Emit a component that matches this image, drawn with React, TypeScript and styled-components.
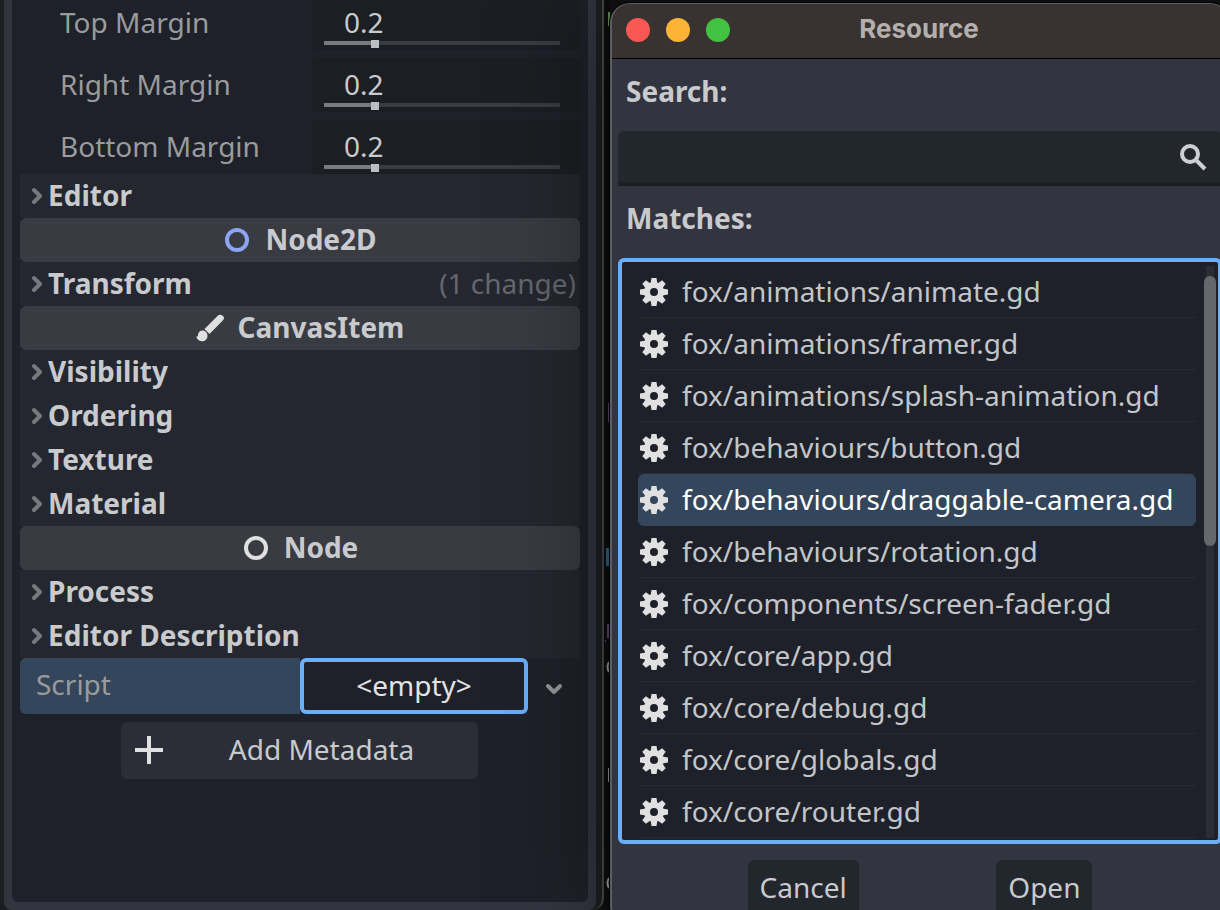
import React, { useState } from "react";
import styled, { createGlobalStyle } from "styled-components";

const GlobalStyle = createGlobalStyle`
  * { box-sizing: border-box; }
  body {
    margin: 0;
    background: #111213;
    color: #c8cacd;
    font: 28px/36px "Noto Sans", sans-serif;
  }
  button, input { font: inherit; color: inherit; }
`;

const Desktop = styled.div`
  display: grid;
  grid-template-columns: minmax(0, 604fr) 6px minmax(0, 610fr);
  grid-template-rows: minmax(0, 1fr);
  height: 100vh;
  overflow: hidden;
`;

/* ---------- Inspector ---------- */

const EditorWindow = styled.div`
  display: flex;
  min-height: 0;
  padding: 0 6px 0 4px;
  background: #1c1f22;
  border-right: 2px solid #46484a;
  border-bottom-right-radius: 12px;
`;

const Dock = styled.section`
  display: flex;
  flex: 1;
  min-width: 0;
  padding: 0 8px 8px;
  background: #32353f;
  border-radius: 0 0 8px 8px;
`;

const Inspector = styled.div`
  display: flex;
  flex: 1;
  flex-direction: column;
  min-width: 0;
  padding: 0 8px;
  overflow: hidden;
  background: #1e2129;
  border-radius: 0 0 6px 6px;
  > * { flex-shrink: 0; }
`;

const MarginGroup = styled.div`
  display: flex;
  flex-direction: column;
  gap: 8px;
  margin-top: -4px;
`;

const PropertyRow = styled.div`
  display: grid;
  grid-template-columns: minmax(0, 292fr) minmax(0, 268fr);
  height: 54px;
`;

const PropertyLabel = styled.label<{ $indent: number }>`
  padding: 8px 0 0 ${(p) => p.$indent}px;
  color: #9a9b9d;
`;

const ValueBox = styled.div`
  display: flex;
  flex-direction: column;
  padding: 9px 12px 0;
  background: #1b1e22;
  border-radius: 6px;
`;

const ValueInput = styled.input`
  width: 100%;
  height: 34px;
  padding: 0 20px;
  border: 0;
  outline: 0;
  background: none;
`;

const ValueSlider = styled.input`
  appearance: none;
  width: 100%;
  height: 8px;
  margin: 1px 0 0;
  outline: 0;
  background:
    linear-gradient(#797b7f, #797b7f) 0 1px / 20% 4px no-repeat,
    linear-gradient(#393c40, #393c40) 0 1px / calc(100% - 8px) 4px no-repeat;
  &::-webkit-slider-thumb {
    appearance: none;
    width: 8px;
    height: 8px;
    background: #bdbec1;
  }
`;

const SectionButton = styled.button`
  display: flex;
  align-items: center;
  width: 100%;
  height: 44px;
  padding: 0 4px 2px 12px;
  border: 0;
  background: #24272f;
  font-weight: 700;
  text-align: left;
  svg { flex: none; margin: 2px 6px 0 0; }
`;

const ChangeCount = styled.span`
  margin-left: auto;
  color: #65686e;
  font-weight: 400;
`;

const ClassHeading = styled.h2`
  display: flex;
  align-items: center;
  justify-content: center;
  gap: 14px;
  height: 44px;
  margin: 0;
  padding-bottom: 2px;
  background: #393b43;
  border-radius: 6px;
  font-size: 28px;
  font-weight: 700;
  svg { margin-top: 2px; }
`;

const ScriptRow = styled.div`
  display: grid;
  grid-template-columns: minmax(0, 280fr) minmax(0, 228fr) 52px;
  height: 56px;
`;

const ScriptLabel = styled.label`
  padding: 8px 16px 0;
  background: #34465b;
  border-radius: 6px 0 0 6px;
  color: #9a9b9d;
`;

const ResourceButton = styled.button`
  padding: 0 0 2px;
  border: 4px solid #69affa;
  border-radius: 6px;
  background: #1e2129;
  color: #e2e3e4;
`;

const DropButton = styled.button`
  display: flex;
  align-items: center;
  justify-content: center;
  padding: 6px 0 0;
  border: 0;
  background: none;
`;

const AddButton = styled.button`
  display: flex;
  align-items: center;
  width: 357px;
  height: 57px;
  margin: 8px 0 0 101px;
  padding: 0 14px 1px;
  border: 0;
  border-radius: 6px;
  background: #2b2e36;
  svg { flex: none; }
  span { flex: 1; padding: 0 0 2px 16px; }
`;

/* ---------- Code behind the windows ---------- */

const CodeEdge = styled.svg`
  display: block;
  background: #0d0d0e;
`;

/* ---------- Resource dialog ---------- */

const Dialog = styled.div`
  position: relative;
  align-self: start;
  margin: 3px -10px 0 0;
  border: 2px solid #5c5e64;
  border-top-width: 1px;
  border-radius: 20px;
  background: #32353f;
  box-shadow: 0 0 0 1px #000, 0 0 110px rgba(0, 0, 0, 0.5);
`;

const TitleBar = styled.header`
  display: grid;
  grid-template-columns: 1fr auto 1fr;
  align-items: center;
  height: 55px;
  padding: 0 16px 2px 14px;
  border-bottom: 1px solid #000;
  border-radius: 18px 18px 0 0;
  background: #383330;
`;

const Lights = styled.div`
  display: flex;
  gap: 16px;
`;

const Light = styled.button<{ $color: string }>`
  width: 24px;
  height: 24px;
  padding: 0;
  border: 0;
  border-radius: 50%;
  background: ${(p) => p.$color};
`;

const Title = styled.h1`
  margin: 0;
  padding-bottom: 2px;
  color: #b3afad;
  font: 700 26px/32px Inter, sans-serif;
`;

const DialogBody = styled.div`
  display: flex;
  flex-direction: column;
  padding: 0 6px 8px;
`;

const FieldLabel = styled.label`
  padding: 14px 8px 22px;
  font-weight: 700;
`;

const SearchField = styled.div`
  display: flex;
  align-items: center;
  height: 55px;
  padding: 0 15px 0 12px;
  border-bottom: 4px solid #1b1e22;
  border-radius: 6px 6px 0 0;
  background: #22262d;
  input {
    flex: 1;
    min-width: 0;
    border: 0;
    outline: 0;
    background: none;
  }
`;

const MatchPanel = styled.div`
  display: flex;
  gap: 8px;
  padding: 4px 2px 2px 16px;
  border: 4px solid #69affa;
  border-radius: 6px;
  background: #1e2129;
`;

const MatchList = styled.ul`
  flex: 1;
  min-width: 0;
  margin: 0;
  padding: 0;
  list-style: none;
`;

const MatchItem = styled.button<{ $selected: boolean }>`
  display: flex;
  align-items: center;
  gap: 14px;
  width: 100%;
  height: 52px;
  padding: 0 2px 2px;
  border: 0;
  border-bottom: 1px solid ${(p) => (p.$selected ? "#34465b" : "#282b32")};
  border-radius: ${(p) => (p.$selected ? "6px" : "0")};
  background: ${(p) => (p.$selected ? "#34465b" : "none")};
  color: ${(p) => (p.$selected ? "#ffffff" : "#c3c5c8")};
  text-align: left;
  white-space: nowrap;
  svg { flex: none; margin-top: 2px; }
`;

const ScrollTrack = styled.div`
  display: flex;
  justify-content: center;
  width: 12px;
  padding-top: 10px;
  background: linear-gradient(#2a2d34, #2a2d34) center / 8px 100% no-repeat;
`;

const ScrollThumb = styled.div`
  width: 12px;
  height: 270px;
  border-radius: 6px;
  background: #64676b;
`;

const Actions = styled.footer`
  display: flex;
  justify-content: space-evenly;
  gap: 8px;
  padding: 16px 0 0;
`;

const ActionButton = styled.button`
  height: 56px;
  padding: 0 12px 2px;
  border: 0;
  border-radius: 6px;
  background: #22262d;
`;

/* ---------- Icons ---------- */

const ChevronRight = () => (
  <svg width="10" height="18" viewBox="0 0 10 18" fill="none" aria-hidden="true">
    <path d="M2 3 L8 9 L2 15" stroke="#77797d" strokeWidth="4" strokeLinejoin="round" strokeLinecap="round" />
  </svg>
);

const ChevronDown = () => (
  <svg width="20" height="14" viewBox="0 0 20 14" fill="none" aria-hidden="true">
    <path d="M4 4 L10 10 L16 4" stroke="#949599" strokeWidth="4" strokeLinecap="round" strokeLinejoin="round" />
  </svg>
);

const Ring = ({ color }: { color: string }) => (
  <svg width="28" height="28" viewBox="0 0 28 28" fill="none" aria-hidden="true">
    <circle cx="14" cy="14" r="10" stroke={color} strokeWidth="4" />
  </svg>
);

const Brush = () => (
  <svg width="28" height="28" viewBox="0 0 28 28" fill="#e0e0e0" aria-hidden="true">
    <path d="M8.500 15 L22 1.500 C24 -.5 28 1.500 28 4 C28 5 27.500 5.500 27 6.200 L13.500 20 Z" />
    <path d="M6.500 16.500 C9.500 16.500 11.500 18.800 11.500 21.700 C11.500 25 9 27.300 6 27.300 C3.500 27.300 1.500 25.800 0 22.500 C1 23 2 22.500 2 21 C2 18.500 4 16.500 6.500 16.500 Z" />
  </svg>
);

const Plus = () => (
  <svg width="28" height="28" viewBox="0 0 28 28" aria-hidden="true">
    <path d="M12 0h4v12h12v4H16v12h-4V16H0v-4h12z" fill="#e0e0e0" />
  </svg>
);

const Magnifier = () => (
  <svg width="28" height="28" viewBox="0 0 28 28" fill="none" stroke="#cdcfd2" aria-hidden="true">
    <circle cx="11" cy="11" r="8" strokeWidth="4" />
    <path d="M17 17 L26 26" strokeWidth="4" />
  </svg>
);

const Gear = () => (
  <svg width="28" height="28" viewBox="0 0 28 28" aria-hidden="true">
    <g fill="#e0e0e0">
      {[0, 45, 90, 135, 180, 225, 270, 315].map((angle) => (
        <path key={angle} d="M11.500 0h5l1 6h-7z" transform={`rotate(${angle} 14 14)`} />
      ))}
    </g>
    <circle cx="14" cy="14" r="7" fill="none" stroke="#e0e0e0" strokeWidth="6" />
  </svg>
);

/* ---------- Content ---------- */

const margins = ["Top Margin", "Right Margin", "Bottom Margin"];

const matches = [
  "fox/animations/animate.gd",
  "fox/animations/framer.gd",
  "fox/animations/splash-animation.gd",
  "fox/behaviours/button.gd",
  "fox/behaviours/draggable-camera.gd",
  "fox/behaviours/rotation.gd",
  "fox/components/screen-fader.gd",
  "fox/core/app.gd",
  "fox/core/debug.gd",
  "fox/core/globals.gd",
  "fox/core/router.gd",
];

const Section = ({ name, note }: { name: string; note?: string }) => (
  <SectionButton type="button" aria-expanded={false}>
    <ChevronRight />
    {name}
    {note && <ChangeCount>{note}</ChangeCount>}
  </SectionButton>
);

const MarginProperty = ({ name }: { name: string }) => {
  const id = name.toLowerCase().replace(" ", "-");
  return (
    <PropertyRow>
      <PropertyLabel htmlFor={id} $indent={40}>{name}</PropertyLabel>
      <ValueBox>
        <ValueInput id={id} type="text" defaultValue="0.2" />
        <ValueSlider type="range" min={0} max={1} step={0.1} defaultValue={0.2} aria-label={`${name} slider`} />
      </ValueBox>
    </PropertyRow>
  );
};

export default function App() {
  const [selected, setSelected] = useState("fox/behaviours/draggable-camera.gd");

  return (
    <>
      <GlobalStyle />
      <Desktop>
        <EditorWindow>
          <Dock aria-label="Inspector">
            <Inspector>
              <MarginGroup>
                {margins.map((name) => <MarginProperty key={name} name={name} />)}
              </MarginGroup>
              <Section name="Editor" />
              <ClassHeading><Ring color="#8da5f3" />Node2D</ClassHeading>
              <Section name="Transform" note="(1 change)" />
              <ClassHeading><Brush />CanvasItem</ClassHeading>
              <Section name="Visibility" />
              <Section name="Ordering" />
              <Section name="Texture" />
              <Section name="Material" />
              <ClassHeading><Ring color="#e0e0e0" />Node</ClassHeading>
              <Section name="Process" />
              <Section name="Editor Description" />
              <ScriptRow>
                <ScriptLabel htmlFor="script">Script</ScriptLabel>
                <ResourceButton id="script" type="button">&lt;empty&gt;</ResourceButton>
                <DropButton type="button" aria-label="Script options"><ChevronDown /></DropButton>
              </ScriptRow>
              <AddButton type="button"><Plus /><span>Add Metadata</span></AddButton>
            </Inspector>
          </Dock>
        </EditorWindow>

        <CodeEdge width="6" height="910" viewBox="0 0 6 910" aria-hidden="true">
          <path d="M4 12h2v14h-2z" fill="#5f9150" />
          <path d="M4 403h1v19h-1z" fill="#5c4478" />
          <path d="M2 548h3v18h-3z" fill="#2f6288" />
          <path d="M3 624h2v14h-2zM1 640h1v2h-1z" fill="#5c4478" />
          <path d="M5 662q-3 5 0 10M5 878q-3 5 0 10" fill="none" stroke="#9a9a9a" strokeWidth="2" />
          <path d="M4 768h1v14h-1z" fill="#9a9a9a" />
        </CodeEdge>

        <Dialog role="dialog" aria-labelledby="dialog-title">
          <TitleBar>
            <Lights>
              <Light type="button" aria-label="Close" $color="#f95852" />
              <Light type="button" aria-label="Minimize" $color="#fdb436" />
              <Light type="button" aria-label="Zoom" $color="#43c140" />
            </Lights>
            <Title id="dialog-title">Resource</Title>
          </TitleBar>
          <DialogBody>
            <FieldLabel htmlFor="search">Search:</FieldLabel>
            <SearchField>
              <input id="search" type="text" />
              <Magnifier />
            </SearchField>
            <FieldLabel as="div" id="matches">Matches:</FieldLabel>
            <MatchPanel>
              <MatchList aria-labelledby="matches">
                {matches.map((path) => (
                  <li key={path}>
                    <MatchItem type="button" $selected={path === selected} onClick={() => setSelected(path)}>
                      <Gear />
                      {path}
                    </MatchItem>
                  </li>
                ))}
              </MatchList>
              <ScrollTrack><ScrollThumb /></ScrollTrack>
            </MatchPanel>
            <Actions>
              <ActionButton type="button">Cancel</ActionButton>
              <ActionButton type="button">Open</ActionButton>
            </Actions>
          </DialogBody>
        </Dialog>
      </Desktop>
    </>
  );
}
